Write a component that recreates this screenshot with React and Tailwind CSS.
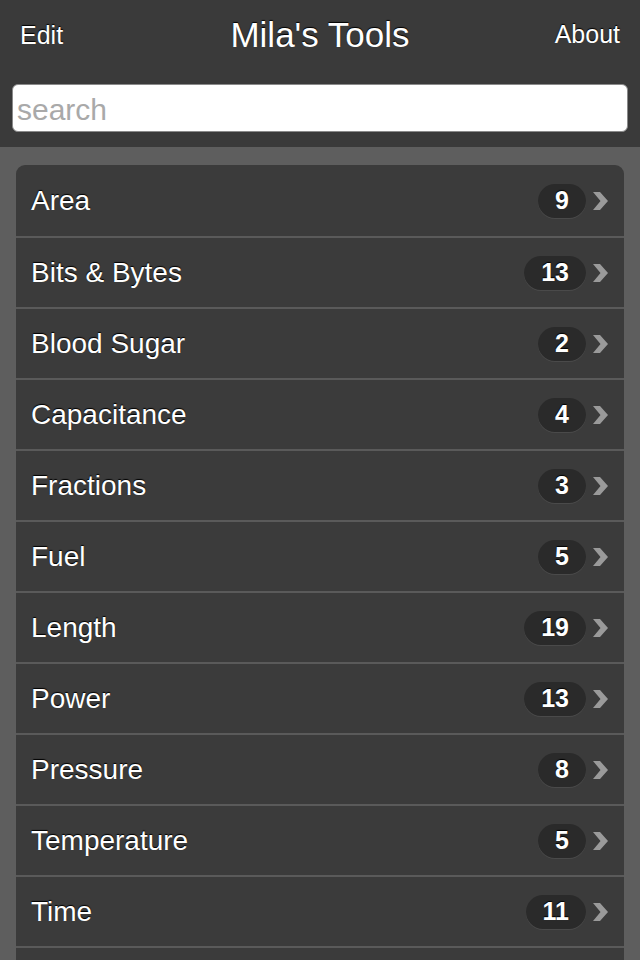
import React from 'react';

const items = [
  { name: 'Area', count: 9 },
  { name: 'Bits & Bytes', count: 13 },
  { name: 'Blood Sugar', count: 2 },
  { name: 'Capacitance', count: 4 },
  { name: 'Fractions', count: 3 },
  { name: 'Fuel', count: 5 },
  { name: 'Length', count: 19 },
  { name: 'Power', count: 13 },
  { name: 'Pressure', count: 8 },
  { name: 'Temperature', count: 5 },
  { name: 'Time', count: 11 },
];

function Chevron() {
  return (
    <svg width="18" height="20" viewBox="0 0 18 20" className="shrink-0">
      <path d="M1 1 L8 1 L16 10 L8 19 L1 19 L8.5 10 Z" fill="#9a9a9a" />
    </svg>
  );
}

export default function App() {
  return (
    <div
      className="w-[640px] h-[960px] overflow-hidden bg-[#5e5e5e] text-white"
      style={{ fontFamily: '"Liberation Sans", Arial, sans-serif' }}
    >
      <div className="bg-[#3a3a3a] h-[147px] px-3 pt-[14px]">
        <div className="grid grid-cols-[1fr_auto_1fr] items-center h-[40px] px-2 leading-none">
          <span className="justify-self-start text-[25px] pt-[2px] [text-shadow:0_-1px_1px_#000]">Edit</span>
          <span className="text-[35px] [text-shadow:0_-1px_1px_#000]">Mila's Tools</span>
          <span className="justify-self-end text-[25px] [text-shadow:0_-1px_1px_#000]">About</span>
        </div>
        <div className="mt-[30px] h-[48px] bg-white rounded-[6px] border border-[#8a8a8a] flex items-center px-[4px] pt-[2px]">
          <span className="text-[30px] text-[#a9a9a9]">search</span>
        </div>
      </div>
      <div className="px-4 pt-[18px]">
        <div className="rounded-t-[9px] overflow-hidden bg-[#3b3b3b]">
          {items.map((it, i) => (
            <div
              key={it.name}
              className={`h-[71px] flex items-center pl-[15px] pr-[14px] ${i > 0 ? 'border-t-2 border-[#5a5a5a]' : ''}`}
            >
              <span className="flex-1 text-[28px] [text-shadow:0_-1px_1px_#000]">{it.name}</span>
              <span className="h-[34px] min-w-[46px] px-[17px] rounded-full bg-[#2a2a2a] shadow-[0_1px_0_#4a4a4a] flex items-center justify-center text-[25px] font-bold [text-shadow:0_-1px_1px_#000] mr-[6px]">
                {it.count}
              </span>
              <Chevron />
            </div>
          ))}
          <div className="h-[71px] border-t-2 border-[#5a5a5a]" />
        </div>
      </div>
    </div>
  );
}
